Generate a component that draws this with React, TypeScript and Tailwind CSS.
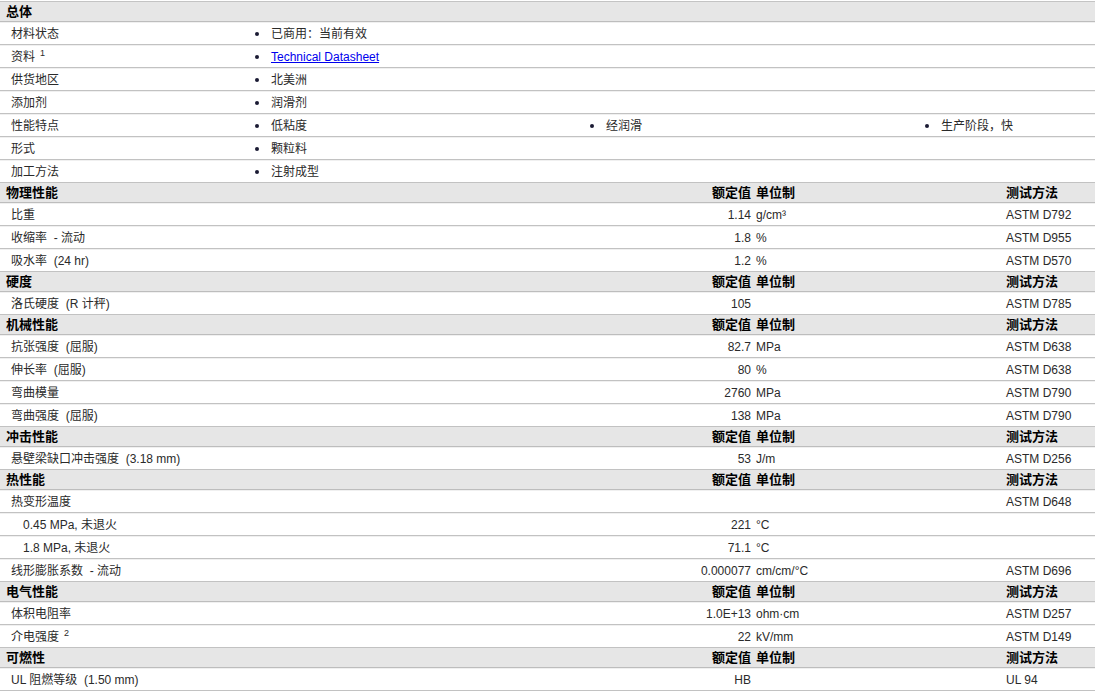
import React from "react";

// 数据表的行类型
type Item = string | { link: string };

type Row =
  | { kind: "head"; title: string; cols?: boolean }
  | { kind: "bullets"; label: string; sup?: string; items: Item[] }
  | {
      kind: "data";
      label: string;
      sup?: string;
      indent?: boolean;
      value?: string;
      unit?: string;
      method?: string;
    };

const rows: Row[] = [
  { kind: "head", title: "总体" },
  { kind: "bullets", label: "材料状态", items: ["已商用：当前有效"] },
  { kind: "bullets", label: "资料", sup: "1", items: [{ link: "Technical Datasheet" }] },
  { kind: "bullets", label: "供货地区", items: ["北美洲"] },
  { kind: "bullets", label: "添加剂", items: ["润滑剂"] },
  { kind: "bullets", label: "性能特点", items: ["低粘度", "经润滑", "生产阶段，快"] },
  { kind: "bullets", label: "形式", items: ["颗粒料"] },
  { kind: "bullets", label: "加工方法", items: ["注射成型"] },

  { kind: "head", title: "物理性能", cols: true },
  { kind: "data", label: "比重", value: "1.14", unit: "g/cm³", method: "ASTM D792" },
  { kind: "data", label: "收缩率  - 流动", value: "1.8", unit: "%", method: "ASTM D955" },
  { kind: "data", label: "吸水率  (24 hr)", value: "1.2", unit: "%", method: "ASTM D570" },

  { kind: "head", title: "硬度", cols: true },
  { kind: "data", label: "洛氏硬度  (R 计秤)", value: "105", method: "ASTM D785" },

  { kind: "head", title: "机械性能", cols: true },
  { kind: "data", label: "抗张强度  (屈服)", value: "82.7", unit: "MPa", method: "ASTM D638" },
  { kind: "data", label: "伸长率  (屈服)", value: "80", unit: "%", method: "ASTM D638" },
  { kind: "data", label: "弯曲模量", value: "2760", unit: "MPa", method: "ASTM D790" },
  { kind: "data", label: "弯曲强度  (屈服)", value: "138", unit: "MPa", method: "ASTM D790" },

  { kind: "head", title: "冲击性能", cols: true },
  { kind: "data", label: "悬壁梁缺口冲击强度  (3.18 mm)", value: "53", unit: "J/m", method: "ASTM D256" },

  { kind: "head", title: "热性能", cols: true },
  { kind: "data", label: "热变形温度", method: "ASTM D648" },
  { kind: "data", label: "0.45 MPa, 未退火", indent: true, value: "221", unit: "°C" },
  { kind: "data", label: "1.8 MPa, 未退火", indent: true, value: "71.1", unit: "°C" },
  { kind: "data", label: "线形膨胀系数  - 流动", value: "0.000077", unit: "cm/cm/°C", method: "ASTM D696" },

  { kind: "head", title: "电气性能", cols: true },
  { kind: "data", label: "体积电阻率", value: "1.0E+13", unit: "ohm·cm", method: "ASTM D257" },
  { kind: "data", label: "介电强度", sup: "2", value: "22", unit: "kV/mm", method: "ASTM D149" },

  { kind: "head", title: "可燃性", cols: true },
  { kind: "data", label: "UL 阻燃等级  (1.50 mm)", value: "HB", method: "UL 94" },
];

function Label({ text, sup }: { text: string; sup?: string }) {
  return (
    <span className="whitespace-pre">
      {text}
      {sup && <sup className="ml-[5px] text-[9px] relative -top-[5px]">{sup}</sup>}
    </span>
  );
}

function RowShell({ children }: { children: React.ReactNode }) {
  return (
    <div className="h-[23px] border-t border-[#f0f0f0] border-b border-b-[#c2c2c2]">
      <div className="h-full pt-[1px]">{children}</div>
    </div>
  );
}

function App() {
  return (
    <div
      className="w-[1095px] h-[691px] overflow-hidden bg-white pt-[1px] text-[12px] text-[#2a2a2a]"
      style={{ fontFamily: '"Liberation Sans", Arial, "Noto Sans CJK SC", sans-serif' }}
    >
      {rows.map((row, i) => {
        if (row.kind === "head") {
          return (
            <div
              key={i}
              className={
                "bg-[#e6e6e6] border-b border-[#bdbdbd] grid grid-cols-[600px_151px_255px_1fr] items-center text-[13px] font-bold text-black " +
                (i === 0 ? "h-[21px] border-t border-t-[#c4c4c4]" : "h-[20px]")
              }
            >
              <div className="pl-[6px]">{row.title}</div>
              <div className="text-right">{row.cols ? "额定值" : ""}</div>
              <div className="pl-[5px]">{row.cols ? "单位制" : ""}</div>
              <div>{row.cols ? "测试方法" : ""}</div>
            </div>
          );
        }
        if (row.kind === "bullets") {
          return (
            <RowShell key={i}>
              <div className="h-full grid grid-cols-[255px_335px_335px_1fr] items-center">
                <div className="pl-[11px]">
                  <Label text={row.label} sup={row.sup} />
                </div>
                {row.items.map((it, j) => (
                  <div key={j} className="flex items-center">
                    <span className="w-[4px] h-[4px] rounded-full bg-[#1a1a33]" />
                    {typeof it === "string" ? (
                      <span className="ml-[12px]">{it}</span>
                    ) : (
                      <a href="#" className="ml-[12px] text-[#0000ee] underline">
                        {it.link}
                      </a>
                    )}
                  </div>
                ))}
              </div>
            </RowShell>
          );
        }
        return (
          <RowShell key={i}>
            <div className="h-full grid grid-cols-[600px_151px_255px_1fr] items-center">
              <div className={row.indent ? "pl-[23px]" : "pl-[11px]"}>
                <Label text={row.label} sup={row.sup} />
              </div>
              <div className="text-right">{row.value ?? ""}</div>
              <div className="pl-[5px]">{row.unit ?? ""}</div>
              <div>{row.method ?? ""}</div>
            </div>
          </RowShell>
        );
      })}
    </div>
  );
}

export default App;
